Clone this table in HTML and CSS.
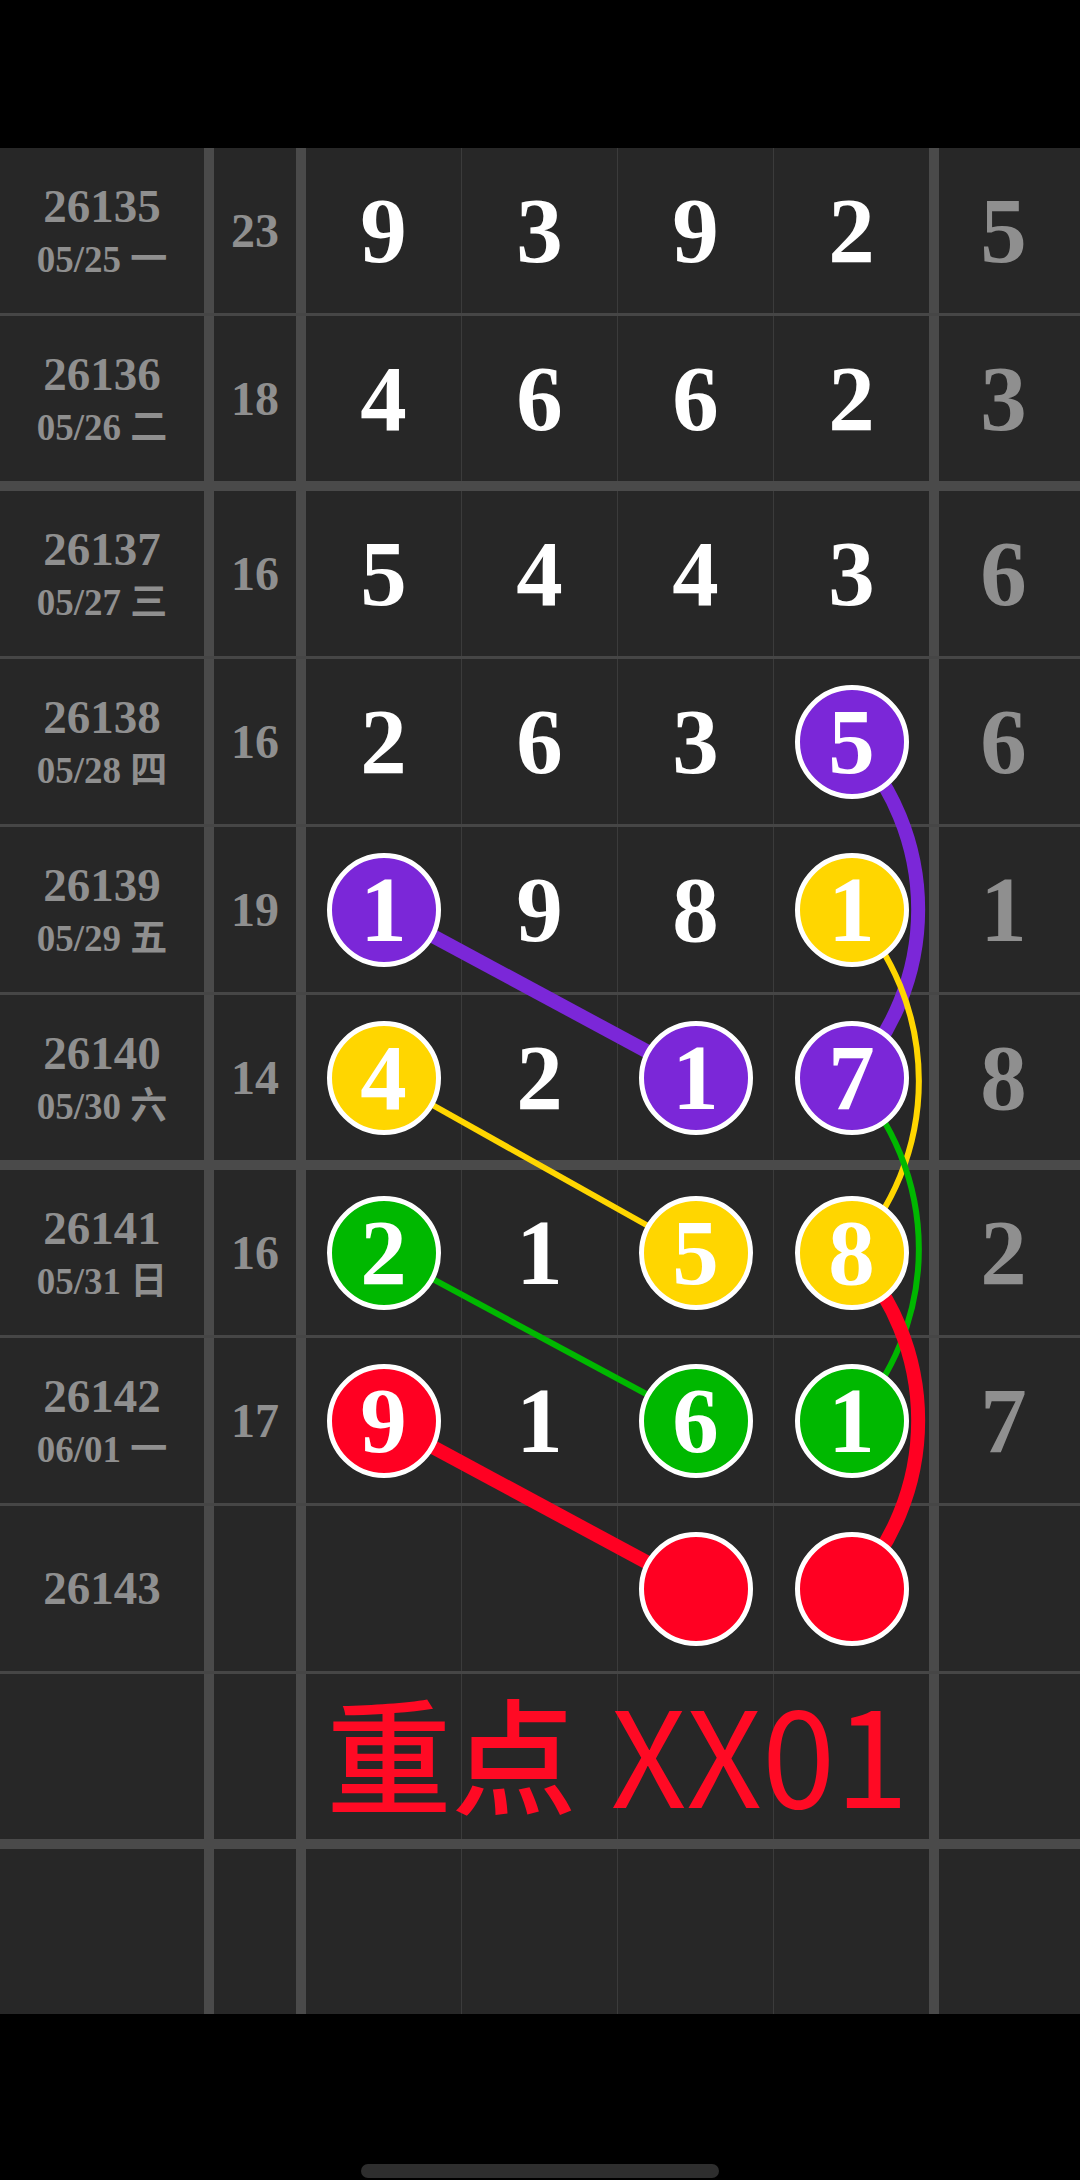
FILE: index.html
```html
<!DOCTYPE html>
<html lang="zh-CN">
<head>
    <meta charset="UTF-8">
    <title>走势图</title>
    <link rel="stylesheet" href="styles.css">
</head>
<body>
<div id="screen">
    <div class="status"></div>

    <div id="board">
        <!-- 连线 -->
        <svg class="links" width="1080" height="1866" viewBox="0 0 1080 1866">
            <g fill="none">
                <line x1="383.5" y1="761.5" x2="695.5" y2="929.5" stroke="#7b27d8" stroke-width="14"/>
                <path d="M851.5 593.5 A245 245 0 0 1 851.5 929.5" stroke="#7b27d8" stroke-width="14"/>
                <line x1="383.5" y1="929.5" x2="695.5" y2="1104.5" stroke="#ffd600" stroke-width="6"/>
                <path d="M851.5 761.5 A252 252 0 0 1 851.5 1104.5" stroke="#ffd600" stroke-width="6"/>
                <line x1="383.5" y1="1104.5" x2="695.5" y2="1272.5" stroke="#00b800" stroke-width="6"/>
                <path d="M851.5 929.5 A252 252 0 0 1 851.5 1272.5" stroke="#00b800" stroke-width="6"/>
                <line x1="383.5" y1="1272.5" x2="695.5" y2="1440.5" stroke="#ff0022" stroke-width="14"/>
                <path d="M851.5 1104.5 A245 245 0 0 1 851.5 1440.5" stroke="#ff0022" stroke-width="14"/>
            </g>
        </svg>

        <div class="row">
            <div class="c-issue"><b>26135</b><span>05/25 一</span></div>
            <div class="c-sum">23</div>
            <div class="c-num">9</div>
            <div class="c-num">3</div>
            <div class="c-num">9</div>
            <div class="c-num end">2</div>
            <div class="c-tail">5</div>
        </div>
        <div class="row split">
            <div class="c-issue"><b>26136</b><span>05/26 二</span></div>
            <div class="c-sum">18</div>
            <div class="c-num">4</div>
            <div class="c-num">6</div>
            <div class="c-num">6</div>
            <div class="c-num end">2</div>
            <div class="c-tail">3</div>
        </div>
        <div class="row">
            <div class="c-issue"><b>26137</b><span>05/27 三</span></div>
            <div class="c-sum">16</div>
            <div class="c-num">5</div>
            <div class="c-num">4</div>
            <div class="c-num">4</div>
            <div class="c-num end">3</div>
            <div class="c-tail">6</div>
        </div>
        <div class="row">
            <div class="c-issue"><b>26138</b><span>05/28 四</span></div>
            <div class="c-sum">16</div>
            <div class="c-num">2</div>
            <div class="c-num">6</div>
            <div class="c-num">3</div>
            <div class="c-num end"><i class="ball purple">5</i></div>
            <div class="c-tail">6</div>
        </div>
        <div class="row">
            <div class="c-issue"><b>26139</b><span>05/29 五</span></div>
            <div class="c-sum">19</div>
            <div class="c-num"><i class="ball purple">1</i></div>
            <div class="c-num">9</div>
            <div class="c-num">8</div>
            <div class="c-num end"><i class="ball yellow">1</i></div>
            <div class="c-tail">1</div>
        </div>
        <div class="row split">
            <div class="c-issue"><b>26140</b><span>05/30 六</span></div>
            <div class="c-sum">14</div>
            <div class="c-num"><i class="ball yellow">4</i></div>
            <div class="c-num">2</div>
            <div class="c-num"><i class="ball purple">1</i></div>
            <div class="c-num end"><i class="ball purple">7</i></div>
            <div class="c-tail">8</div>
        </div>
        <div class="row">
            <div class="c-issue"><b>26141</b><span>05/31 日</span></div>
            <div class="c-sum">16</div>
            <div class="c-num"><i class="ball green">2</i></div>
            <div class="c-num">1</div>
            <div class="c-num"><i class="ball yellow">5</i></div>
            <div class="c-num end"><i class="ball yellow">8</i></div>
            <div class="c-tail">2</div>
        </div>
        <div class="row">
            <div class="c-issue"><b>26142</b><span>06/01 一</span></div>
            <div class="c-sum">17</div>
            <div class="c-num"><i class="ball red">9</i></div>
            <div class="c-num">1</div>
            <div class="c-num"><i class="ball green">6</i></div>
            <div class="c-num end"><i class="ball green">1</i></div>
            <div class="c-tail">7</div>
        </div>
        <div class="row">
            <div class="c-issue"><b>26143</b></div>
            <div class="c-sum"></div>
            <div class="c-num"></div>
            <div class="c-num"></div>
            <div class="c-num"><i class="ball red"></i></div>
            <div class="c-num end"><i class="ball red"></i></div>
            <div class="c-tail"></div>
        </div>
        <div class="row split tip">
            <div class="c-issue"></div>
            <div class="c-sum"></div>
            <div class="c-num"></div>
            <div class="c-num"></div>
            <div class="c-num"></div>
            <div class="c-num end"></div>
            <div class="c-tail"></div>
            <div class="tip-text">重点 <em>XX01</em></div>
        </div>
        <div class="row last">
            <div class="c-issue"></div>
            <div class="c-sum"></div>
            <div class="c-num"></div>
            <div class="c-num"></div>
            <div class="c-num"></div>
            <div class="c-num end"></div>
            <div class="c-tail"></div>
        </div>
    </div>

    <div class="nav"><span class="home"></span></div>
</div>
</body>
</html>
```

FILE: styles.css
```css
*{
    margin:0;
    padding:0;
    box-sizing: border-box;
}
body{
    background:#000;
    width:1080px;
    font-family:"Liberation Serif","Times New Roman","Noto Sans CJK SC",serif;
}
#screen{
    width:1080px;
    height:2180px;
    display:flex;
    flex-direction:column;
    overflow:hidden;
}
.status{
    height:148px;
    flex-shrink:0;
}
#board{
    position:relative;
    height:1866px;
    flex-shrink:0;
    overflow:hidden;
    background:#272727;
}
.links{
    position:absolute;
    left:0;
    top:0;
    z-index:1;
}
.row{
    display:flex;
    height:168px;
    border-bottom:3px solid #464646;
}
.row.split{
    height:175px;
    border-bottom:10px solid #4a4a4a;
}
.row.last{
    height:165px;
    border-bottom:0;
}
.c-issue,.c-sum,.c-num,.c-tail{
    display:flex;
    align-items:center;
    justify-content:center;
    font-weight:bold;
    line-height:1;
}
.c-issue{
    width:214px;
    flex-direction:column;
    border-right:10px solid #4a4a4a;
    color:#8f8f8f;
}
.c-issue b{
    font-size:47px;
    line-height:47px;
}
.c-issue span{
    font-size:37px;
    line-height:37px;
    margin-top:11px;
}
.c-sum{
    width:92px;
    border-right:10px solid #4a4a4a;
    color:#8f8f8f;
    font-size:48px;
}
.c-num{
    width:156px;
    border-right:1px solid #3b3b3b;
    color:#fff;
    font-size:93px;
}
.c-num.end{
    width:165px;
    border-right:10px solid #4a4a4a;
}
.c-tail{
    flex:1;
    padding-right:12px;
    color:#8f8f8f;
    font-size:93px;
}
.ball{
    position:relative;
    z-index:2;
    width:114px;
    height:114px;
    border:5px solid #fff;
    border-radius:50%;
    display:flex;
    align-items:center;
    justify-content:center;
    font-style:normal;
}
.purple{ background:#7b27d8; }
.yellow{ background:#ffd600; }
.green{ background:#00b800; }
.red{ background:#ff0022; }

.tip{
    position:relative;
}
.tip-text{
    position:absolute;
    left:306px;
    width:623px;
    top:0;
    bottom:0;
    padding-bottom:12px;
    z-index:2;
    display:flex;
    align-items:center;
    justify-content:center;
    white-space:pre;
    color:#ff0a24;
    font-family:"Noto Sans CJK SC",sans-serif;
    font-size:125px;
    font-weight:500;
    line-height:1;
}
.tip-text em{
    font-style:normal;
    font-size:132px;
    font-weight:normal;
    margin-left:6px;
}
.nav{
    flex:1;
    display:flex;
    align-items:flex-end;
    justify-content:center;
}
.home{
    width:358px;
    height:14px;
    margin-bottom:2px;
    border-radius:7px;
    background:#2e2e2e;
}
```
